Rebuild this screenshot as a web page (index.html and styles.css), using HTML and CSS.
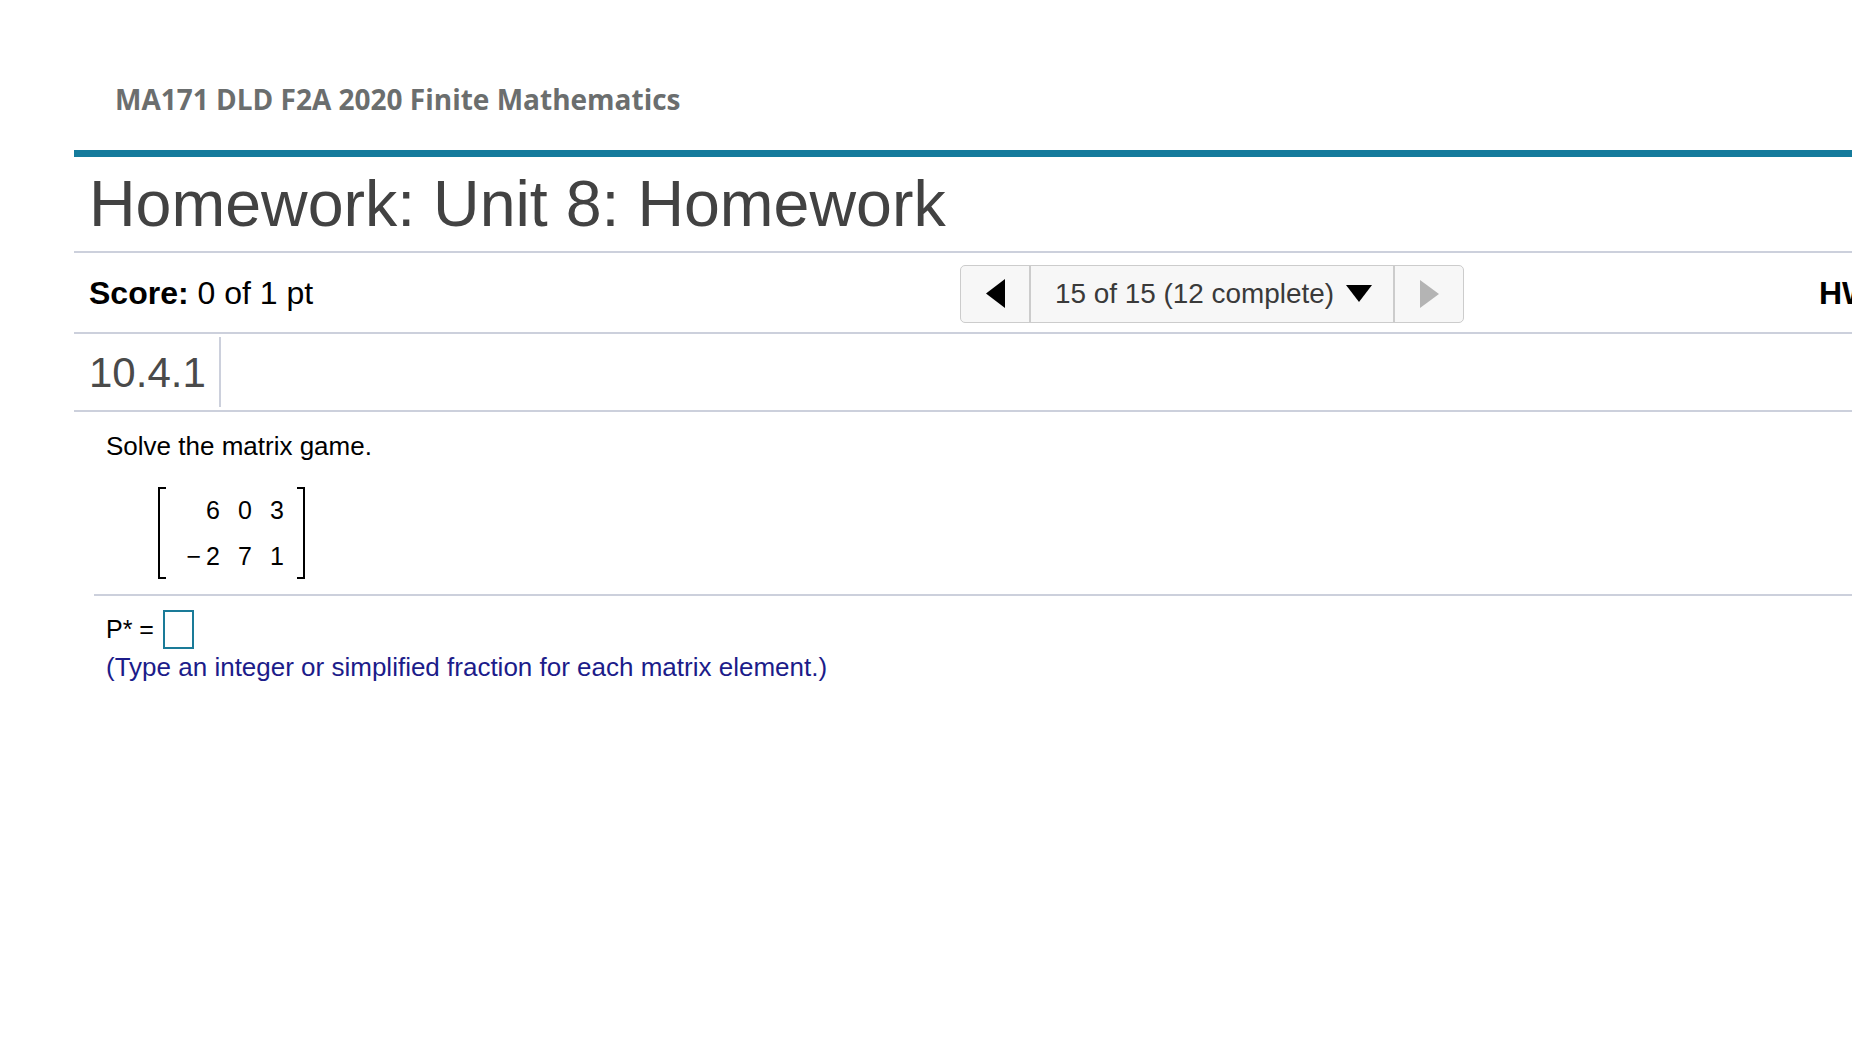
FILE: index.html
```html
<!DOCTYPE html>
<html>
<head>
<meta charset="utf-8">
<title>Homework: Unit 8: Homework</title>
<link rel="stylesheet" href="styles.css">
</head>
<body>
<div class="page">
  <header class="course">
    <div class="course-title">MA171 DLD F2A 2020 Finite Mathematics</div>
  </header>
  <div class="teal-bar"></div>
  <h1 class="hw-title">Homework: Unit 8: Homework</h1>
  <div class="score-row">
    <div class="score"><b>Score:</b> 0 of 1 pt</div>
    <div class="nav">
      <div class="nav-btn nav-prev">
        <svg width="19" height="29" viewBox="0 0 19 29"><polygon points="19,0 19,29 0,14.5" fill="#000"/></svg>
      </div>
      <div class="nav-mid">
        <span>15 of 15 (12 complete)</span>
        <svg class="caret" width="26" height="17" viewBox="0 0 26 17"><polygon points="0,0 26,0 13,17" fill="#000"/></svg>
      </div>
      <div class="nav-btn nav-next">
        <svg width="19" height="28" viewBox="0 0 19 28"><polygon points="0,0 0,28 19,14" fill="#b4b4b4"/></svg>
      </div>
    </div>
    <div class="hw-score"><b>HW Score: 80%, 12 of 15 pts</b></div>
  </div>
  <div class="qid-row">
    <div class="qid">10.4.1</div>
  </div>
  <div class="question">
    <p class="prompt">Solve the matrix game.</p>
    <div class="matrix">
      <span class="bracket left"></span>
      <table class="mtable">
        <tr><td>6</td><td>0</td><td>3</td></tr>
        <tr><td>&minus;&#8201;2</td><td>7</td><td>1</td></tr>
      </table>
      <span class="bracket right"></span>
    </div>
  </div>
  <div class="answer">
    <div class="answer-line">P* = <span class="answer-box"></span></div>
    <div class="hint">(Type an integer or simplified fraction for each matrix element.)</div>
  </div>
</div>
</body>
</html>
```

FILE: styles.css
```css
html, body {
  margin: 0;
  padding: 0;
  background: #fff;
  overflow: hidden;
}
body {
  font-family: "Liberation Sans", Arial, Helvetica, sans-serif;
  color: #000;
}
.page {
  width: 2200px;
  margin-left: 74px;
}
.course {
  height: 150px;
  box-sizing: border-box;
  padding: 80px 0 0 41px;
}
.course-title {
  font-family: "Open Sans", sans-serif;
  font-weight: 700;
  font-size: 28px;
  line-height: 38px;
  color: #6b6e6e;
}
.teal-bar {
  height: 7px;
  background: #157b9c;
}
.hw-title {
  margin: 0;
  height: 96px;
  box-sizing: border-box;
  padding: 10px 0 0 15px;
  font-weight: 400;
  font-size: 64.5px;
  line-height: 74px;
  color: #424242;
  border-bottom: 2px solid #ccd0dc;
}
.score-row {
  display: flex;
  align-items: center;
  height: 81px;
  box-sizing: border-box;
  border-bottom: 2px solid #ccd0dc;
  padding-top: 2px;
}
.score {
  flex: 0 0 871px;
  padding-left: 15px;
  font-size: 32px;
}
.score b { font-weight: 700; }
.nav {
  display: flex;
  height: 58px;
  box-sizing: border-box;
  border: 1px solid #cccccc;
  border-radius: 5px;
  background: #f7f7f7;
}
.nav-btn {
  width: 68px;
  display: flex;
  align-items: center;
  justify-content: center;
}
.nav-prev { border-right: 2px solid #cccccc; }
.nav-next { border-left: 2px solid #cccccc; }
.nav-mid {
  width: 362px;
  display: flex;
  align-items: center;
  box-sizing: border-box;
  padding-left: 24px;
  font-size: 27.9px;
  color: #3a3a3a;
}
.caret { margin-left: 12px; }
.hw-score {
  margin-left: 355px;
  font-size: 32px;
  white-space: nowrap;
}
.qid-row {
  height: 78px;
  box-sizing: border-box;
  border-bottom: 2px solid #ccd0dc;
  padding: 3px 0;
  display: flex;
}
.qid {
  padding: 0 15px;
  border-right: 2px solid #ccd0dc;
  font-size: 42px;
  line-height: 72px;
  color: #4a4a4a;
  width: 115px;
}
.question {
  padding: 19px 0 0 32px;
}
.prompt {
  margin: 0;
  font-size: 26px;
  line-height: 30px;
}
.matrix {
  display: flex;
  margin: 26px 0 0 52px;
  height: 92px;
}
.bracket {
  width: 6px;
  border: 2px solid #000;
}
.bracket.left { border-right: none; }
.bracket.right { border-left: none; }
.mtable {
  border-collapse: collapse;
  margin: 0 13px 0 20px;
  font-size: 25px;
}
.mtable td {
  height: 44px;
  padding: 0 0 0 10px;
  text-align: right;
  vertical-align: middle;
}
.mtable td:first-child { padding-left: 0; width: 34px; }
.mtable td:nth-child(2) { width: 22px; }
.mtable td:nth-child(3) { width: 22px; }
.answer {
  margin: 15px 0 0 20px;
  border-top: 2px solid #ccd0dc;
  padding: 14px 0 0 12px;
}
.answer-line {
  display: flex;
  align-items: center;
  font-size: 25px;
  height: 39px;
}
.answer-box {
  display: inline-block;
  width: 27px;
  height: 35px;
  border: 2px solid #1a7b98;
  margin-left: 9px;
}
.hint {
  font-size: 26px;
  line-height: 36px;
  color: #1c1c8a;
}
```
